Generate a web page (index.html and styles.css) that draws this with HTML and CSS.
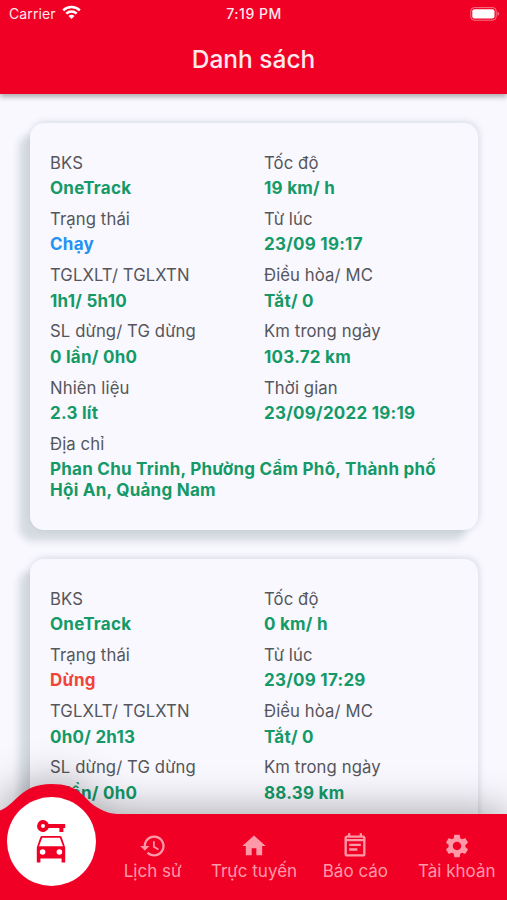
FILE: index.html
```html
<!DOCTYPE html>
<html lang="vi">
<head>
<meta charset="utf-8">
<meta name="viewport" content="width=device-width, initial-scale=1">
<title>Danh sách</title>
<link rel="stylesheet" href="styles.css">
</head>
<body>
<div class="app">
  <header class="header">
    <div class="status">
      <div class="carrier"><span>Carrier</span>
        <svg width="19" height="15" viewBox="0 0 19 15" fill="none" stroke="currentColor" stroke-width="2.5"><path d="M1.2 5.4a12 12 0 0 1 16.6 0M4.3 8.6a7.5 7.5 0 0 1 10.4 0"/><path d="M9.5 14l-3-3a4.2 4.2 0 0 1 6 0z" fill="currentColor" stroke="none"/></svg>
      </div>
      <div class="time">7:19 PM</div>
      <svg class="battery" width="30" height="14" viewBox="0 0 30 14"><rect x=".8" y=".6" width="25.4" height="12.6" rx="3.5" fill="none" stroke="#fff" stroke-opacity=".45"/><rect x="2.3" y="2.2" width="22.2" height="9.4" rx="2" fill="#fff"/><path d="M27.5 4.8q1.6.6 1.6 2t-1.6 2z" fill="#fff" fill-opacity=".45"/></svg>
    </div>
    <h1 class="title">Danh sách</h1>
  </header>

  <main class="list">
    <section class="card">
      <div class="field"><span class="label">BKS</span><b class="value">OneTrack</b></div>
      <div class="field"><span class="label">Tốc độ</span><b class="value">19 km/ h</b></div>
      <div class="field"><span class="label">Trạng thái</span><b class="value running">Chạy</b></div>
      <div class="field"><span class="label">Từ lúc</span><b class="value">23/09 19:17</b></div>
      <div class="field"><span class="label">TGLXLT/ TGLXTN</span><b class="value">1h1/ 5h10</b></div>
      <div class="field"><span class="label">Điều hòa/ MC</span><b class="value">Tắt/ 0</b></div>
      <div class="field"><span class="label">SL dừng/ TG dừng</span><b class="value">0 lần/ 0h0</b></div>
      <div class="field"><span class="label">Km trong ngày</span><b class="value">103.72 km</b></div>
      <div class="field"><span class="label">Nhiên liệu</span><b class="value">2.3 lít</b></div>
      <div class="field"><span class="label">Thời gian</span><b class="value">23/09/2022 19:19</b></div>
      <div class="field wide"><span class="label">Địa chỉ</span><b class="value">Phan Chu Trinh, Phường Cẩm Phô, Thành phố Hội An, Quảng Nam</b></div>
    </section>
    <section class="card">
      <div class="field"><span class="label">BKS</span><b class="value">OneTrack</b></div>
      <div class="field"><span class="label">Tốc độ</span><b class="value">0 km/ h</b></div>
      <div class="field"><span class="label">Trạng thái</span><b class="value stopped">Dừng</b></div>
      <div class="field"><span class="label">Từ lúc</span><b class="value">23/09 17:29</b></div>
      <div class="field"><span class="label">TGLXLT/ TGLXTN</span><b class="value">0h0/ 2h13</b></div>
      <div class="field"><span class="label">Điều hòa/ MC</span><b class="value">Tắt/ 0</b></div>
      <div class="field"><span class="label">SL dừng/ TG dừng</span><b class="value">0 lần/ 0h0</b></div>
      <div class="field"><span class="label">Km trong ngày</span><b class="value">88.39 km</b></div>
    </section>
  </main>

  <nav class="nav">
    <svg class="nav-shape" width="507" height="117" viewBox="0 0 507 117"><path d="M0 27.5C16 22 20 1 51.5 1C79 1 84 15 94 22.5C103 28.5 110 31 120 31H507V117H0z" fill="#f10026"/></svg>
    <div class="tabs">
      <a class="tab active"><span class="disc">
        <svg width="48" height="48" viewBox="0 0 24 24" fill="currentColor" fill-rule="evenodd"><path d="M10.83 3A3 3 0 1 0 10.83 5H16.2v2h2V5H19.1V3zM8 5a1 1 0 1 1 0-2a1 1 0 0 1 0 2z"/><path d="M4.9 22.3V14.7L6.6 9.7Q6.9 9 7.6 9H16.4Q17.1 9 17.4 9.7L19.1 14.7V22.3H17.3V20.2H6.7V22.3zM7.6 9.9L6 14.1H18L16.4 9.9zM7.8 15.6a1.4 1.4 0 1 0 0 2.8a1.4 1.4 0 0 0 0-2.8zM16.2 15.6a1.4 1.4 0 1 0 0 2.8a1.4 1.4 0 0 0 0-2.8z"/></svg>
      </span></a>
      <a class="tab"><svg viewBox="0 0 24 24"><path d="M13 3c-4.97 0-9 4.03-9 9H1l3.89 3.89.07.14L9 12H6c0-3.87 3.13-7 7-7s7 3.13 7 7-3.13 7-7 7c-1.93 0-3.68-.79-4.94-2.06l-1.42 1.42C8.27 19.99 10.51 21 13 21c4.97 0 9-4.03 9-9s-4.03-9-9-9zm-1 5v5l4.28 2.54.72-1.21-3.5-2.08V8H12z"/></svg><span>Lịch sử</span></a>
      <a class="tab"><svg viewBox="0 0 24 24"><path d="M10 20v-6h4v6h5v-8h3L12 3 2 12h3v8z"/></svg><span>Trực tuyến</span></a>
      <a class="tab"><svg viewBox="0 0 24 24"><path d="M17 10H7v2h10v-2zm2-7h-1V1h-2v2H8V1H6v2H5c-1.11 0-1.99.9-1.99 2L3 19c0 1.1.89 2 2 2h14c1.1 0 2-.9 2-2V5c0-1.1-.9-2-2-2zm0 16H5V8h14v11zm0-13H5V5h14v1zm-5 8H7v2h7v-2z"/></svg><span>Báo cáo</span></a>
      <a class="tab"><svg viewBox="0 0 24 24"><path d="M19.14 12.94c.04-.3.06-.61.06-.94 0-.32-.02-.64-.07-.94l2.03-1.58c.18-.14.23-.41.12-.61l-1.92-3.32c-.12-.22-.37-.29-.59-.22l-2.39.96c-.5-.38-1.03-.7-1.62-.94l-.36-2.54c-.04-.24-.24-.41-.48-.41h-3.84c-.24 0-.43.17-.47.41l-.36 2.54c-.59.24-1.13.57-1.62.94l-2.39-.96c-.22-.08-.47 0-.59.22L2.74 8.87c-.12.21-.08.47.12.61l2.03 1.58c-.05.3-.09.63-.09.94s.02.64.07.94l-2.03 1.58c-.18.14-.23.41-.12.61l1.92 3.32c.12.22.37.29.59.22l2.39-.96c.5.38 1.03.7 1.62.94l.36 2.54c.05.24.24.41.48.41h3.84c.24 0 .44-.17.47-.41l.36-2.54c.59-.24 1.13-.56 1.62-.94l2.39.96c.22.08.47 0 .59-.22l1.92-3.32c.12-.22.07-.47-.12-.61l-2.01-1.58zM12 15.6c-1.98 0-3.6-1.62-3.6-3.6s1.62-3.6 3.6-3.6 3.6 1.62 3.6 3.6-1.62 3.6-3.6 3.6z"/></svg><span>Tài khoản</span></a>
    </div>
  </nav>
</div>
</body>
</html>
```
FILE: styles.css
```css
* { box-sizing: border-box; }
body {
  margin: 0;
  font-family: Inter, "Noto Sans", sans-serif;
  background: #f8f8fe;
}
.app {
  position: relative;
  display: flex;
  flex-direction: column;
  height: 900px;
  overflow: hidden;
}
.header {
  position: relative;
  flex: none;
  height: 94px;
  background: #f10026;
  color: #ffe9ee;
  box-shadow: 0 3px 5px rgba(0, 0, 0, .3);
}
.status {
  display: grid;
  grid-template-columns: 1fr auto 1fr;
  align-items: center;
  height: 27px;
  padding: 0 7px 0 9px;
  font-size: 14px;
}
.carrier { display: flex; align-items: center; gap: 6px; letter-spacing: .1px; }
.carrier svg { color: #fff; margin: -2px 0 0 0; }
.time { font-weight: 550; font-size: 14px; letter-spacing: .5px; margin-left: -1px; }
.battery { justify-self: end; }
.title {
  margin: 16px 0 0;
  font-size: 24.5px;
  line-height: 32px;
  font-weight: 500;
  letter-spacing: 0;
  text-align: center;
}
.list {
  display: flex;
  flex-direction: column;
  gap: 29px;
  padding: 29px 29px 0 30px;
}
.card {
  flex: none;
  display: grid;
  grid-template-columns: 214px 1fr;
  row-gap: 5.2px;
  align-content: start;
  height: 407px;
  padding: 28.8px 20px 0;
  border-radius: 14px;
  background: #f8f8fe;
  box-shadow: 1px -1px 6px rgba(120, 130, 145, .25), -11px 11px 7px #d5dbe1;
}
.field { display: flex; flex-direction: column; }
.wide { grid-column: 1 / -1; }
.label {
  font-size: 16.7px;
  line-height: 23px;
  color: #55565b;
  letter-spacing: .1px;
}
.value {
  padding-top: 3.5px;
  margin-bottom: 3.5px;
  font-size: 17px;
  line-height: 21px;
  font-weight: 650;
  color: #149967;
  letter-spacing: .25px;
}
.running { color: #2492f3; }
.stopped { color: #f24336; }
.nav {
  position: absolute;
  left: 0;
  right: 0;
  bottom: 0;
  height: 117px;
}
.nav-shape {
  position: absolute;
  inset: 0;
  overflow: visible;
  filter: drop-shadow(0 0 22px rgba(0, 0, 0, .38));
}
.tabs {
  position: relative;
  display: grid;
  grid-template-columns: repeat(5, 1fr);
  height: 100%;
}
.tab {
  display: flex;
  flex-direction: column;
  align-items: center;
  padding: 49px 0 0 1px;
  font-size: 17px;
  line-height: 22px;
  letter-spacing: 0;
  white-space: nowrap;
  color: #ff99a8;
}
.tab > svg { width: 28px; height: 28px; fill: currentColor; }
.active { padding-top: 14px; }
.disc {
  display: flex;
  align-items: center;
  justify-content: center;
  width: 89px;
  height: 89px;
  border-radius: 50%;
  background: #fff;
  color: #f10026;
}
```
